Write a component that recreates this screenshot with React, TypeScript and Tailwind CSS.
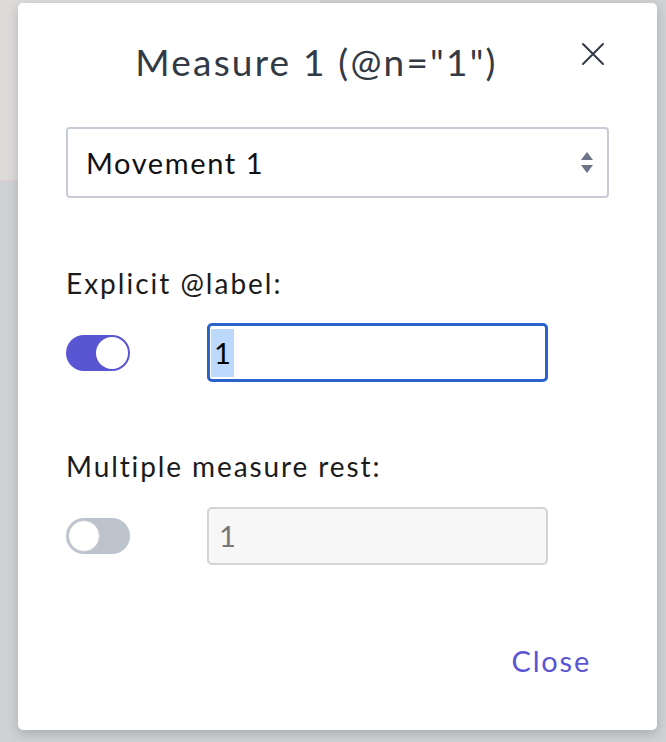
import React, { useState } from "react";

// toggle switch used for both rows
function Toggle({ on }: { on: boolean }) {
  return (
    <div
      className={
        on
          ? "w-[64px] h-[36px] rounded-full bg-[#5a55d3] flex items-center justify-end p-[2px]"
          : "w-[64px] h-[36px] rounded-full bg-[#bcc3cc] flex items-center justify-start p-[2px]"
      }
    >
      <div
        className={
          on
            ? "w-[32px] h-[32px] rounded-full bg-white"
            : "w-[32px] h-[32px] rounded-full bg-white border border-[#c4cad2]"
        }
      />
    </div>
  );
}

export default function App() {
  const [movement] = useState("Movement 1");
  return (
    <div
      className="relative w-[666px] h-[742px] overflow-hidden bg-[#ced2d5]"
      style={{ fontFamily: "Lato, 'Noto Sans', sans-serif" }}
    >
      {/* page behind the modal */}
      <div className="w-[320px] h-[181px] bg-[#dddada] border-b border-[#e9cccc]" />

      {/* modal */}
      <div className="absolute left-[18px] top-[3px] w-[639px] h-[727px] bg-white rounded-[5px] shadow-[0_4px_12px_rgba(0,0,0,0.18)] px-[48px] pt-[33px] flex flex-col">
        {/* header */}
        <div className="flex items-start">
          <h2 className="flex-1 text-center text-[37px] leading-[52px] text-[#323a45] tracking-[2.2px]">
            Measure 1 (@n="1")
          </h2>
          <button className="w-[42px] h-[42px] flex items-center justify-end pr-[4px] -mt-[3px]">
            <svg width="24" height="24" viewBox="0 0 24 24" fill="none" stroke="#323a45" strokeWidth="2" strokeLinecap="round">
              <path d="M2 2L22 22M22 2L2 22" />
            </svg>
          </button>
        </div>

        {/* movement select */}
        <div className="mt-[39px] h-[71px] border-2 border-[#c8ccd6] rounded-[4px] flex items-center justify-between pl-[18px] pr-[13px]">
          <span className="text-[29px] text-[#111] tracking-[1.6px]">{movement}</span>
          <svg width="14" height="22" viewBox="0 0 14 22" fill="#6d7488">
            <path d="M7 0L13 8H1Z" />
            <path d="M7 21L13 13H1Z" />
          </svg>
        </div>

        {/* explicit label */}
        <div className="mt-[68px] text-[28px] leading-[34px] text-[#1b1b1b] tracking-[2px]">Explicit @label:</div>
        <div className="mt-[23px] flex items-center">
          <Toggle on={true} />
          <div className="ml-[77px] w-[341px] h-[59px] border-[3px] border-[#2a63c9] rounded-[5px] flex items-center pl-[1px]">
            <span className="bg-[#bcd8fa] text-[29px] text-black leading-[48px] px-[3px]">1</span>
          </div>
        </div>

        {/* multiple measure rest */}
        <div className="mt-[67px] text-[28px] leading-[34px] text-[#1b1b1b] tracking-[1.9px]">Multiple measure rest:</div>
        <div className="mt-[24px] flex items-center">
          <Toggle on={false} />
          <div className="ml-[77px] w-[341px] h-[58px] border-2 border-[#d4d4d4] rounded-[5px] bg-[#f7f7f7] flex items-center pl-[10px]">
            <span className="text-[29px] text-[#777]">1</span>
          </div>
        </div>

        {/* footer */}
        <div className="mt-auto mb-[48px] flex justify-end pr-[18px]">
          <button className="text-[29px] text-[#5a55d3] tracking-[1.8px]">Close</button>
        </div>
      </div>
    </div>
  );
}
